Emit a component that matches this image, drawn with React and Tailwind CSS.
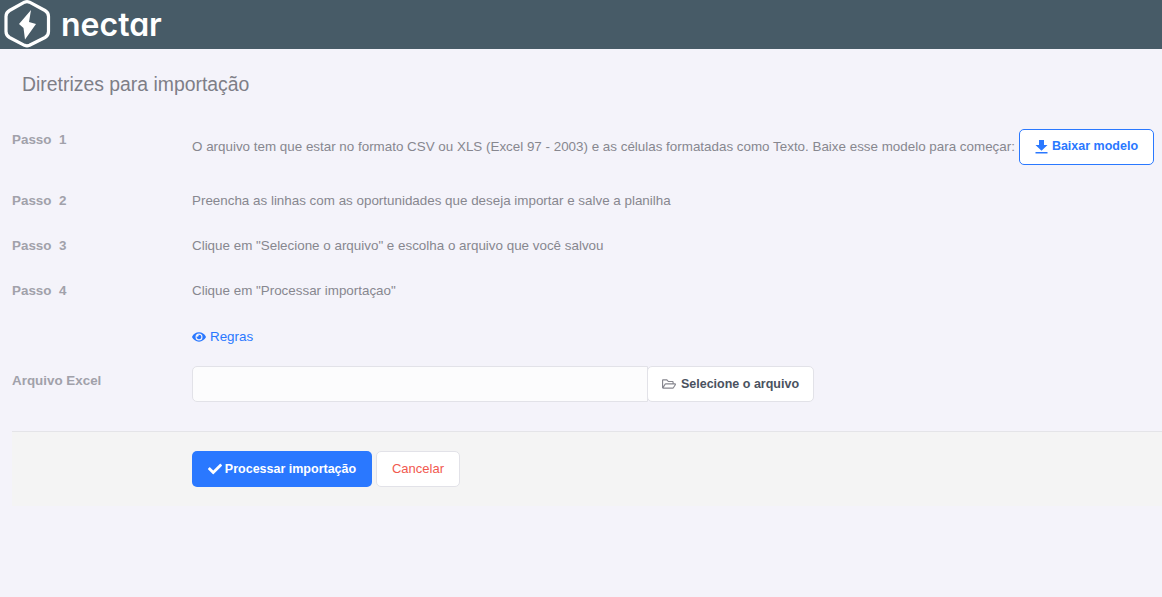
import { FaCheck, FaEye, FaRegFolderOpen } from "react-icons/fa";

const STEPS = [
  { label: "Passo  2", text: "Preencha as linhas com as oportunidades que deseja importar e salve a planilha" },
  { label: "Passo  3", text: 'Clique em "Selecione o arquivo" e escolha o arquivo que você salvou' },
  { label: "Passo  4", text: 'Clique em "Processar importaçao"' },
];

function Logo() {
  return (
    <svg width="54" height="49" viewBox="0 0 54 49" fill="none" className="shrink-0">
      <path d="M24.500 2.200Q27 1.200 29.500 2.200L45 10.500Q48.500 12.500 48.500 16.500V31.500Q48.500 35.500 45 37.500L29.500 45.300Q27 46.300 24.500 45.300L9.500 37.500Q6 35.500 6 31.500V16.500Q6 12.500 9.500 10.500Z" stroke="white" strokeWidth="3.200" strokeLinejoin="round" />
      <path d="M31 10 19 24 23.500 28 25 39.500 36 24 29 22Z" fill="white" />
    </svg>
  );
}

function DownloadIcon() {
  return (
    <svg width="13" height="14" viewBox="0 0 13 14" fill="currentColor" className="shrink-0">
      <path d="M4 0H9V5H12.500L6.500 10.800.5 5H4Z" />
      <rect x="0.500" y="12" width="12" height="1.500" />
    </svg>
  );
}

function Label({ children }) {
  return <div className="w-[180px] shrink-0 whitespace-pre text-[13.4px] font-bold leading-[20px] text-[#a1a1aa]">{children}</div>;
}

export default function App() {
  return (
    <div className="min-h-[597px] overflow-hidden bg-[#f4f3fa] font-['Liberation_Sans',sans-serif] text-[13.4px] text-[#87878f]">
      <header className="flex h-[49px] items-center gap-[7px] bg-[#475b67]">
        <Logo />
        <span className="font-['Inter',sans-serif] text-[32px] font-semibold leading-none text-white [font-feature-settings:'cv11']">nectar</span>
      </header>

      <h1 className="pl-[22px] pt-[23px] text-[19.4px] leading-[24px] text-[#7e7e87]">Diretrizes para importação</h1>

      <div className="pl-[12px] pt-[34px]">
        <div className="flex h-[49px] items-start">
          <Label>Passo  1</Label>
          <div className="flex items-center whitespace-nowrap">
            <span className="mt-[-1px] leading-[36px]">O arquivo tem que estar no formato CSV ou XLS (Excel 97 - 2003) e as células formatadas como Texto. Baixe esse modelo para começar:</span>
            <button className="ml-[4px] mt-[-2px] flex h-[36px] w-[135px] items-center justify-center gap-[4px] rounded-[5px] border border-[#2a78ff] bg-white text-[12.5px] font-bold text-[#2a78ff]">
              <DownloadIcon />
              Baixar modelo
            </button>
          </div>
        </div>

        {STEPS.map((step) => (
          <div key={step.label} className="flex h-[45px] items-start pt-[12px]">
            <Label>{step.label}</Label>
            <span className="leading-[20px]">{step.text}</span>
          </div>
        ))}

        <div className="flex h-[33px] items-start pl-[180px] pt-[13px]">
          <a className="flex items-center gap-[4px] leading-[20px] text-[#2a78ff]">
            <FaEye size={14} />
            Regras
          </a>
        </div>

        <div className="mt-[19px] flex h-[36px]">
          <div className="w-[180px] shrink-0 pt-[5px]">
            <Label>Arquivo Excel</Label>
          </div>
          <div className="h-[36px] w-[456px] rounded-l-[5px] border border-[#e2e2e8] bg-[#fcfcfd]" />
          <button className="ml-[-1px] flex h-[36px] w-[167px] items-center justify-center gap-[5px] rounded-[5px] border border-[#e2e2e8] bg-white text-[12.5px] font-bold text-[#4a5260]">
            <FaRegFolderOpen size={14} className="text-[#87878f]" />
            Selecione o arquivo
          </button>
        </div>

        <div className="mt-[29px] h-[75px] border-t border-[#e4e4e8] bg-[#f4f4f4] pl-[180px] pt-[19px]">
          <div className="flex gap-[4px]">
            <button className="flex h-[36px] w-[180px] items-center justify-center gap-[3px] rounded-[5px] bg-[#2a78ff] text-[12.5px] font-bold text-white">
              <FaCheck size={14} />
              Processar importação
            </button>
            <button className="h-[36px] w-[84px] rounded-[5px] border border-[#e2e2e8] bg-white text-[13px] text-[#f1594f]">Cancelar</button>
          </div>
        </div>
      </div>
    </div>
  );
}
